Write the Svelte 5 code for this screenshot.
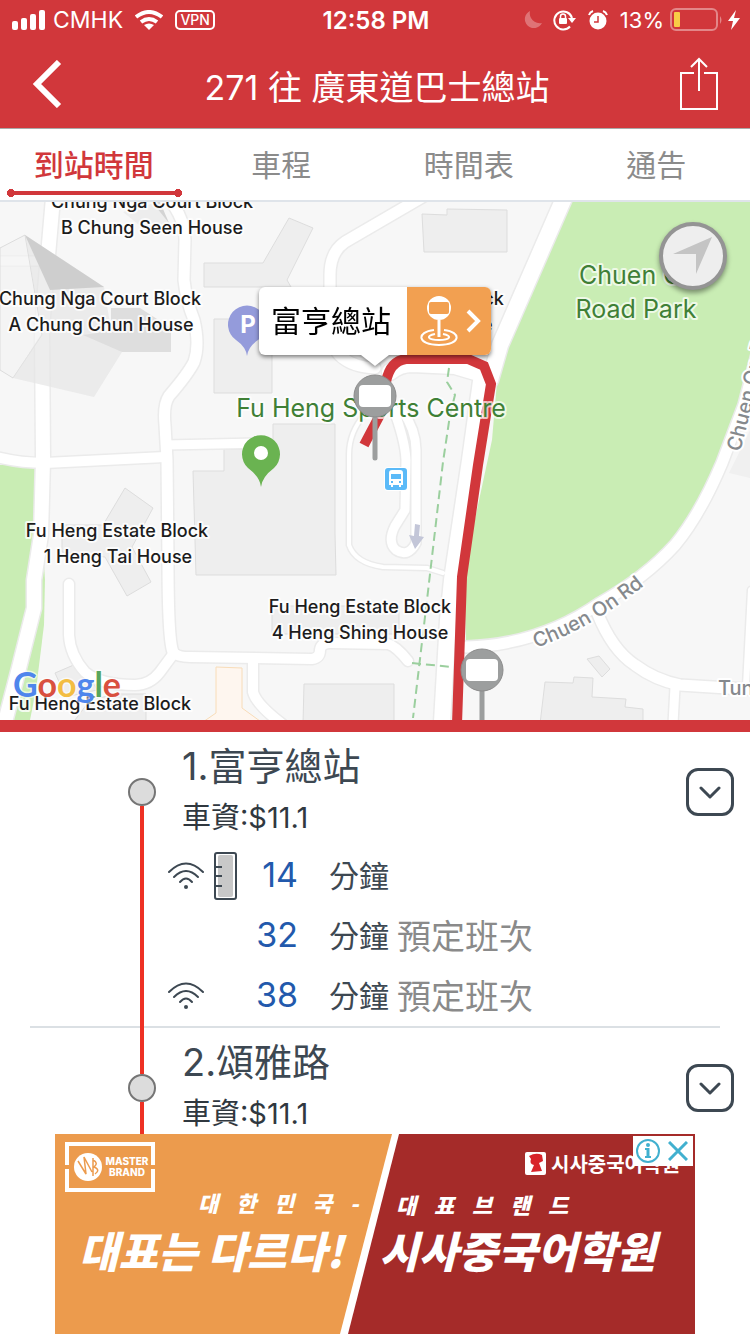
<script>
  const tabs = ['到站時間', '車程', '時間表', '通告'];
  let activeTab = $state(0);

  const stops = [
    {
      name: '1.富亨總站',
      fare: '車資:$11.1',
      arrivals: [
        { live: true, bus: true, minutes: 14, scheduled: false },
        { live: false, bus: false, minutes: 32, scheduled: true },
        { live: true, bus: false, minutes: 38, scheduled: true },
      ],
    },
    { name: '2.頌雅路', fare: '車資:$11.1', arrivals: [] },
  ];

  // white roads: path and width, each drawn over a wider grey casing
  const roads = [
    { d: 'M0 261 H40', w: 9 },
    { d: 'M53 198 L45 290 L42 330 L43 460 L41 535 L34 580 V608 L19 668 L5 722', w: 14 },
    { d: 'M-4 457 Q20 463 45 463 L165 457', w: 10 },
    { d: 'M168 198 Q185 218 185 240 L184 280 Q186 300 194 320 Q200 345 194 362 Q188 374 169 396 Q163 405 165 425 L167 460 L168 560 Q168 640 173 652', w: 11 },
    { d: 'M166 445 L262 443', w: 9 },
    { d: 'M69 584 V635 Q70 655 85 672 Q100 685 135 685 Q150 685 160 672 L174 653 Q178 657 190 657 L312 659 Q320 658 320 650 Q321 643 330 643 L388 644 Q396 646 408 661', w: 10 },
    { d: 'M253 660 V692 Q256 704 282 724', w: 10 },
    { d: 'M424 196 L345 242 Q330 252 330 275 V330 Q332 366 375 368', w: 11 },
    { d: 'M365 414 Q349 432 349 455 V545 Q355 563 383 567 L427 568 L443 573', w: 4 },
    { d: 'M393 408 Q405 440 406 460 L405 510 L395 526 Q387 542 396 550 Q408 558 416 543 V450 Q416 430 402 410', w: 9 },
    { d: 'M564 198 L500 345 L490 380', w: 16 },
    { d: 'M390 372 Q400 364 412 364 L455 366 L482 374 L470 460 L452 580 L448 620 L442 722', w: 16 },
    { d: 'M762 335 L744 405 L722 463 Q700 515 675 545 Q645 578 600 603 Q540 645 466 647', w: 11 },
    { d: 'M597 612 Q612 650 635 665 Q655 680 680 685 L760 690', w: 11 },
    { d: 'M675 687 L673 724', w: 9 },
    { d: 'M751 590 L746 686', w: 6 },
  ];

  const buildings = [
    '422,214 447,215 447,209 507,210 507,252 424,252',
    '289,218 313,228 287,280 291,287 204,287 204,263 263,263',
    '214,319 272,319 272,393 214,393',
    '193,471 224,471 224,449 273,449 273,424 335,424 335,534 336,575 196,575',
    '125,488 153,508 132,547 151,582 127,596 105,557 62,552 62,525 103,525',
    '272,606 399,606 399,634 272,634',
    '304,684 394,684 394,724 303,724',
    '55,673 83,661 97,690 66,697',
    '117,694 146,694 146,724 72,724 90,700',
    '545,682 573,683 574,677 593,678 592,697 626,699 625,707 643,709 643,724 540,724',
    '587,659 599,656 610,669 602,677',
  ];

  const labels = [
    { t: 'Chung Nga Court Block', x: 152, y: 208 },
    { t: 'B Chung Seen House', x: 152, y: 234 },
    { t: 'Chung Nga Court Block', x: 100, y: 305 },
    { t: 'A Chung Chun House', x: 101, y: 331 },
    { t: 'Block', x: 480, y: 305 },
    { t: 'House', x: 465, y: 331 },
    { t: 'Fu Heng Estate Block', x: 117, y: 537 },
    { t: '1 Heng Tai House', x: 118, y: 563 },
    { t: 'Fu Heng Estate Block', x: 360, y: 613 },
    { t: '4 Heng Shing House', x: 360, y: 639 },
    { t: 'Fu Heng Estate Block', x: 100, y: 710 },
  ];
</script>

{#snippet wifi()}
  <svg width="36" height="28" viewBox="0 0 36 28" fill="none" stroke="#3d4852" stroke-width="2" stroke-linecap="round">
    <path d="M1 10 Q18 -7 35 10"/>
    <path d="M6 15 Q18 3 30 15"/>
    <path d="M12 20 Q18 13 24 20"/>
    <circle cx="18" cy="25" r="2" fill="#3d4852" stroke="none"/>
  </svg>
{/snippet}

<div class="app">
  <div class="status">
    <div class="status-side">
      <svg width="33" height="20" viewBox="0 0 33 20" fill="#fff">
        <rect x="0" y="11" width="6" height="9" rx="2"/>
        <rect x="9" y="8" width="6" height="12" rx="2"/>
        <rect x="18" y="4" width="6" height="16" rx="2"/>
        <rect x="27" y="0" width="6" height="20" rx="2"/>
      </svg>
      <span class="carrier">CMHK</span>
      <svg class="status-wifi" width="28" height="20" viewBox="0 0 28 20" fill="none" stroke="#fff" stroke-width="4">
        <path d="M1 7 Q14 -3 27 7"/>
        <path d="M6 12 Q14 6 22 12"/>
        <path d="M14 20 L9 15 Q14 12 19 15 Z" fill="#fff" stroke="none"/>
      </svg>
      <span class="vpn">VPN</span>
    </div>
    <span class="clock">12:58 PM</span>
    <div class="status-side end">
      <svg width="20" height="20" viewBox="0 0 20 20" fill="#fff" opacity="0.3">
        <path d="M7 1 A9 9 0 1 0 19 13 A10 10 0 0 1 7 1 Z"/>
      </svg>
      <svg class="lock" width="23" height="22" viewBox="0 0 23 22" fill="none" stroke="#fff" stroke-width="2">
        <path d="M17 17.5 A9 9 0 1 1 19 9"/>
        <path d="M15 9 H23 L19 14 Z" fill="#fff" stroke="none"/>
        <rect x="6" y="9" width="8" height="6" rx="1" fill="#fff" stroke="none"/>
        <path d="M7.500 9 V7.500 a2.500 2.500 0 0 1 5 0 V9" stroke-width="1.500"/>
      </svg>
      <svg class="alarm" width="20" height="20" viewBox="0 0 20 20">
        <circle cx="10" cy="11" r="8.500" fill="#fff"/>
        <path d="M10 6 V12 H6" fill="none" stroke="#d1373b" stroke-width="1.500"/>
        <path d="M1 5 Q2 2 5 1 M19 5 Q18 2 15 1" fill="none" stroke="#fff" stroke-width="2"/>
      </svg>
      <span class="percent">13%</span>
      <svg width="53" height="24" viewBox="0 0 53 24">
        <rect x="1" y="1" width="46" height="21" rx="5" fill="none" stroke="#fff" stroke-opacity="0.4" stroke-width="2"/>
        <path d="M50 8 Q53 12 50 16 Z" fill="#fff" opacity="0.4"/>
        <rect x="4" y="4" width="6" height="15" rx="1" fill="#f8cd46"/>
      </svg>
      <svg class="bolt" width="12" height="20" viewBox="0 0 12 20" fill="#fff">
        <path d="M8 0 L0 11 H5 L3 20 L12 8 H6 Z"/>
      </svg>
    </div>
  </div>

  <header>
    <button aria-label="返回">
      <svg width="30" height="48" viewBox="0 0 30 48" fill="none" stroke="#fff" stroke-width="6">
        <path d="M27 2 L5 24 L27 46"/>
      </svg>
    </button>
    <h1>271 往 廣東道巴士總站</h1>
    <button class="right" aria-label="分享">
      <svg width="38" height="54" viewBox="0 0 38 54" fill="none" stroke="#fff" stroke-width="2">
        <path d="M14 16 H1 V52 H37 V16 H24"/>
        <path d="M19 34 V2 M11 10 L19 2 L27 10"/>
      </svg>
    </button>
  </header>

  <nav>
    {#each tabs as tab, i}
      <button class="tab" class:active={i === activeTab} onclick={() => (activeTab = i)}>{tab}</button>
    {/each}
  </nav>

  <section class="map">
    <svg class="map-art" viewBox="0 202 750 518">
      <rect x="0" y="202" width="750" height="518" fill="#f7f7f7"/>
      <path d="M573 198 H750 V370 L722 463 Q700 515 675 545 Q645 578 600 603 Q540 645 466 643 L464 570 L492 440 L498 370 Z" fill="#c9edb4"/>
      <path d="M0 465 H38 L45 580 L44 625 L36 690 L30 720 H0 Z" fill="#c9edb4"/>
      <path d="M738 455 L729 473 L750 478 V430 Z" fill="#f0f0f0"/>
      <path d="M216 667 L242 668 V708 L264 724 H200 L216 713 Z" fill="#fef6ef" stroke="#f8dcb8"/>

      {#each buildings as points}
        <polygon {points} fill="#eeeeee" stroke="#dddddd"/>
      {/each}

      <g fill="none" stroke-linecap="round" stroke-linejoin="round">
        {#each roads as road}
          <path d={road.d} stroke="#ebebeb" stroke-width={road.w + 3}/>
        {/each}
        {#each roads as road}
          <path d={road.d} stroke="#ffffff" stroke-width={road.w}/>
        {/each}
      </g>

      <!-- tilted tower blocks -->
      <path d="M0 248 L25 235 L42 335 L13 378 L0 370 Z" fill="#f2f2f2" fill-opacity="0.7" stroke="#dcdcdc"/>
      <path d="M25 235 L104 287 L111 330 L122 352 L94 397 L13 378 L42 333 Z" fill="#e6e6e6" fill-opacity="0.7"/>
      <path d="M25 235 L104 287 L50 290 Z" fill="#cecece"/>
      <path d="M111 308 H140 L171 328 V352 H122 L83 335 L111 331 Z" fill="#dedede"/>
      <path d="M123 212 L158 202 L169 223 L153 236 Z" fill="#ededed"/>
      <path d="M152 202 H160 L169 223 Z" fill="#d4d4d4"/>

      <path d="M449 368 L447 382 L455 395 L450 415 L443 462 L427 600 L413 718 M412 663 L452 667" fill="none" stroke="#9bcf9e" stroke-width="2" stroke-dasharray="9 5"/>
      <path d="M415 524 L420 525 L419 536 L424 537 L415 549 L409 535 L414 536 Z" fill="#c3c6d8"/>

      <path d="M364 445 L382 411 L386 382 Q390 361 406 359 L468 359 L484 366 L491 384 L478 465 L462 577 L457 724" fill="none" stroke="#d1373b" stroke-width="10"/>

      <g class="place">
        <text x="371" y="417" text-anchor="middle">Fu Heng Sports Centre</text>
        <text x="579" y="284">Chuen On</text>
        <text x="636" y="318" text-anchor="middle">Road Park</text>
      </g>

      <path id="road-lower" d="M536 648 Q600 625 660 572" fill="none"/>
      <path id="road-upper" d="M740 452 Q753 405 764 350 L790 250" fill="none"/>
      <g class="road-name">
        <text><textPath href="#road-lower">Chuen On Rd</textPath></text>
        <text><textPath href="#road-upper">Chuen On Rd</textPath></text>
        <text x="718" y="695">Tung</text>
      </g>

      <g class="block-name">
        {#each labels as label}
          <text x={label.x} y={label.y} text-anchor="middle">{label.t}</text>
        {/each}
      </g>

      <path d="M247 356 Q246 347 236 340 A19 19 0 1 1 258 340 Q248 347 247 356 Z" fill="#949bdb"/>
      <text class="parking" x="248" y="333" text-anchor="middle">P</text>
      <path d="M261 487 Q260 477 248 468 A19 19 0 1 1 274 468 Q262 477 261 487 Z" fill="#6ab351"/>
      <circle cx="261" cy="453" r="7" fill="#fff"/>

      <rect x="384" y="467" width="24" height="24" rx="4" fill="#fff"/>
      <rect x="385" y="468" width="22" height="22" rx="3" fill="#5bbaf8"/>
      <path d="M389 473 Q389 470 392 470 H400 Q403 470 403 473 V485 H401 V487 H399 V485 H393 V487 H391 V485 H389 Z" fill="#fff"/>
      <path d="M391 474 H401 V479 H391 Z M391 481 h2 v2 h-2 Z M399 481 h2 v2 h-2 Z" fill="#5bbaf8"/>

      {#each [{ x: 375, y: 396 }, { x: 482, y: 670 }] as flag}
        <g transform="translate({flag.x} {flag.y})">
          <path d="M0 20 V62" stroke="#9c9e9e" stroke-width="5" stroke-linecap="round"/>
          <circle r="21" fill="#9c9e9e" stroke="#8c8c8c"/>
          <rect x="-16" y="-11" width="32" height="22" rx="4" fill="#fff"/>
        </g>
      {/each}

      <text class="google" x="13" y="697"><tspan fill="#4f86ec">G</tspan><tspan fill="#d9503f">o</tspan><tspan fill="#f3bd42">o</tspan><tspan fill="#4f86ec">g</tspan><tspan fill="#58a55c">l</tspan><tspan fill="#d9503f">e</tspan></text>
    </svg>

    <button class="callout">
      <span class="callout-name">富亨總站</span>
      <span class="callout-go">
        <svg width="38" height="52" viewBox="0 0 38 52" fill="none" stroke="#fff" stroke-width="2">
          <circle cx="19" cy="13" r="12" fill="#fff" stroke="none"/>
          <rect x="9" y="7" width="20" height="12" rx="2" fill="#f2a051" stroke="none"/>
          <path d="M19 25 V42" stroke-width="3"/>
          <path d="M14 35 C-4 37 -3 50 19 50 C41 50 42 37 24 35"/>
          <path d="M15 39 C5 41 8 45 19 45 C30 45 33 41 23 39"/>
        </svg>
        <svg width="16" height="24" viewBox="0 0 16 24" fill="none" stroke="#fff" stroke-width="4">
          <path d="M2 2 L12 12 L2 22"/>
        </svg>
      </span>
    </button>

    <button class="locate" aria-label="我的位置">
      <svg width="40" height="40" viewBox="0 0 40 40" fill="#c4c4c4">
        <path d="M39 1 L23 38 V18 H0 Z"/>
      </svg>
    </button>
  </section>

  <ul class="stops">
    {#each stops as stop, i}
      <li>
        <div class="rail">
          <span class="rail-top" class:hidden={i === 0}></span>
          <span class="dot"></span>
          <span class="rail-rest"></span>
        </div>
        <div class="info">
          <h2>{stop.name}</h2>
          <p class="fare">{stop.fare}</p>
          <div class="arrivals">
            {#each stop.arrivals as arrival}
              <div class="arrival">
                <span class="icon">{#if arrival.live}{@render wifi()}{/if}</span>
                <span class="icon">
                  {#if arrival.bus}
                    <svg width="23" height="48" viewBox="0 0 23 48" fill="none" stroke="#3d4852">
                      <rect x="1" y="1" width="21" height="46" rx="2" stroke-width="2"/>
                      <rect x="4" y="3" width="15" height="42" rx="2" fill="#c8c8c8" stroke="none"/>
                      <path d="M1 15 H8 M1 24 H8 M1 34 H8" stroke-width="2"/>
                    </svg>
                  {/if}
                </span>
                <span class="minutes">{arrival.minutes}</span>
                <span class="unit">分鐘</span>
                {#if arrival.scheduled}<span class="scheduled">預定班次</span>{/if}
              </div>
            {/each}
          </div>
        </div>
        <button class="toggle" aria-label="展開">
          <svg width="22" height="14" viewBox="0 0 22 14" fill="none" stroke="#3d4852" stroke-width="3" stroke-linecap="round" stroke-linejoin="round">
            <path d="M2 3 L11 12 L20 3"/>
          </svg>
        </button>
      </li>
    {/each}
  </ul>

  <aside class="ad">
    <a href="#ad">
      <svg viewBox="0 0 640 200">
        <rect width="640" height="200" fill="#ec9b4d"/>
        <path d="M340 0 H640 V200 H290 Z" fill="#a52b29"/>
        <path d="M337 0 H344 L293 200 H285 Z" fill="#fff"/>

        <path d="M12 31 V10 H98 V31 M12 35 V56 H98 V35" fill="none" stroke="#fff" stroke-width="4"/>
        <circle cx="33" cy="33" r="14" fill="#fff"/>
        <path d="M23 27 L31 40 L29 23 L37 38 M38 24 V42 M38 26 Q44 29 39 33 Q46 36 40 40" fill="none" stroke="#ec9b4d" stroke-width="1.500"/>
        <g class="ad-logo">
          <text x="72" y="31" text-anchor="middle">MASTER</text>
          <text x="72" y="42" text-anchor="middle">BRAND</text>
        </g>

        <rect x="470" y="18" width="21" height="23" rx="2" fill="#fff"/>
        <path d="M474 22 Q481 18 487 21 L488 27 L484 29 L487 37 L476 38 L479 31 Q474 30 476 25 Z" fill="#d8232a"/>
        <text class="ad-name" x="496" y="38">시사중국어학원</text>

        <g class="ad-sub">
          <text x="143 181 219 257 295" y="78">대한민국-</text>
          <text x="341 379 417 455 493" y="80">대표브랜드</text>
        </g>
        <g class="ad-main">
          <text x="24" y="134">대표는 다르다!</text>
          <text x="324" y="134">시사중국어학원</text>
        </g>
      </svg>
    </a>
    <div class="ad-choices">
      <button aria-label="廣告資訊">
        <svg width="24" height="24" viewBox="0 0 24 24" fill="none" stroke="#41b0cf" stroke-width="2">
          <circle cx="12" cy="12" r="11"/>
          <path d="M9 10 H12 M9 18 H15"/>
          <path d="M12 9 V19" stroke-width="3"/>
          <circle cx="12" cy="6" r="2" fill="#41b0cf" stroke="none"/>
        </svg>
      </button>
      <button aria-label="關閉廣告">
        <svg width="20" height="20" viewBox="0 0 20 20" fill="none" stroke="#41b0cf" stroke-width="3">
          <path d="M1 1 L19 19 M19 1 L1 19"/>
        </svg>
      </button>
    </div>
  </aside>
</div>

<style>
  :global(body) {
    margin: 0;
    background: #fff;
  }

  .app {
    display: flex;
    flex-direction: column;
    height: 100vh;
    overflow: hidden;
    font-family: Inter, 'Noto Sans CJK TC', sans-serif;
    color: #3d4852;
  }

  button {
    padding: 0;
    border: none;
    background: none;
    font-family: inherit;
    cursor: pointer;
  }

  svg {
    display: block;
    flex: none;
  }

  .status {
    display: grid;
    grid-template-columns: 1fr auto 1fr;
    align-items: center;
    height: 40px;
    padding: 0 10px 0 12px;
    background: #d1373b;
    color: #fff;
    font-size: 23px;
  }

  .status-side {
    display: flex;
    align-items: center;
  }

  .end {
    justify-content: flex-end;
  }

  .carrier {
    margin-left: 8px;
  }

  .status-wifi {
    margin: 0 12px;
  }

  .vpn {
    box-sizing: border-box;
    width: 40px;
    height: 20px;
    border: 2px solid #fff;
    border-radius: 5px;
    font-size: 14px;
    font-weight: 500;
    line-height: 16px;
    text-align: center;
  }

  .clock {
    font-size: 24px;
    font-weight: 600;
  }

  .lock {
    margin-left: 10px;
  }

  .alarm {
    margin: 0 12px;
  }

  .percent {
    margin-right: 6px;
    font-size: 22px;
  }

  .bolt {
    margin-left: 5px;
  }

  header {
    display: grid;
    grid-template-columns: 1fr auto 1fr;
    align-items: center;
    height: 88px;
    padding: 0 32px;
    background: #d1373b;
    border-bottom: 1px solid #a9a9a9;
  }

  h1 {
    margin: 0;
    padding: 8px 0 0 4px;
    color: #fff;
    font-size: 34px;
    font-weight: 400;
    line-height: 40px;
  }

  .right {
    justify-self: end;
  }

  nav {
    display: flex;
    height: 71px;
    border-bottom: 2px solid #dfe4ea;
  }

  .tab {
    position: relative;
    flex: 1;
    padding-bottom: 4px;
    color: #8b8b8b;
    font-size: 30px;
    font-weight: 400;
  }

  .active {
    color: #d1373b;
    font-weight: 500;
  }

  .active::before {
    content: '';
    position: absolute;
    right: 8px;
    bottom: 5px;
    left: 8px;
    height: 4px;
    background: #d1373b;
  }

  .active::after {
    content: '';
    position: absolute;
    right: 6px;
    bottom: 3px;
    left: 7px;
    height: 8px;
    background:
      radial-gradient(circle at 4px 4px, #d1373b 4px, transparent 4px),
      radial-gradient(circle at calc(100% - 4px) 4px, #d1373b 4px, transparent 4px);
  }

  .map {
    position: relative;
    border-bottom: 12px solid #d1373b;
  }

  .map-art {
    width: 100%;
  }

  .map-art text {
    paint-order: stroke;
    stroke-linejoin: round;
  }

  .block-name {
    fill: #1c1c1c;
    stroke: #fff;
    stroke-opacity: 0.8;
    stroke-width: 4px;
    font-size: 18px;
    font-weight: 500;
  }

  .place {
    fill: #3f8036;
    stroke: #fff;
    stroke-opacity: 0.7;
    stroke-width: 4px;
    font-size: 25px;
  }

  .road-name {
    fill: #85898d;
    stroke: #fff;
    stroke-width: 4px;
    font-size: 20px;
    font-weight: 500;
  }

  .parking {
    fill: #fff;
    font-size: 24px;
    font-weight: 700;
  }

  .google {
    font-family: Lato, sans-serif;
    font-size: 34px;
    font-weight: 700;
    stroke: #fff;
    stroke-opacity: 0.6;
    stroke-width: 3px;
  }

  .callout {
    position: absolute;
    top: 85px;
    left: 50%;
    display: flex;
    height: 68px;
    transform: translateX(-50%);
    border-radius: 6px;
    background: #fff;
    filter: drop-shadow(0 2px 2px rgba(0, 0, 0, 0.5));
  }

  .callout::after {
    content: '';
    position: absolute;
    top: 100%;
    left: 50%;
    margin-left: -14px;
    border: 14px solid transparent;
    border-top: 11px solid #fff;
    border-bottom: 0;
  }

  .callout-name {
    padding: 0 16px 0 12px;
    color: #000;
    font-size: 30px;
    line-height: 68px;
  }

  .callout-go {
    display: flex;
    align-items: center;
    justify-content: center;
    gap: 8px;
    box-sizing: border-box;
    width: 84px;
    padding-left: 4px;
    border-radius: 0 6px 6px 0;
    background: #f2a051;
  }

  .locate {
    position: absolute;
    top: 20px;
    right: 23px;
    display: flex;
    align-items: center;
    justify-content: center;
    box-sizing: border-box;
    width: 68px;
    height: 68px;
    border: 4px solid #949494;
    border-radius: 50%;
    background: #eeeeee;
    box-shadow: 0 3px 5px rgba(0, 0, 0, 0.4);
  }

  .stops {
    flex: 1;
    min-height: 0;
    margin: 0;
    padding: 0;
    overflow: hidden;
    list-style: none;
  }

  li {
    position: relative;
    display: flex;
    gap: 12px;
    padding: 0 16px 0 128px;
  }

  li::after {
    content: '';
    position: absolute;
    right: 30px;
    bottom: 0;
    left: 30px;
    height: 2px;
    background: #dbe0e4;
  }

  .rail {
    z-index: 1;
    display: flex;
    flex-direction: column;
    align-items: center;
  }

  .rail-top,
  .rail-rest {
    width: 4px;
    background: #ee3124;
  }

  .rail-top {
    height: 46px;
  }

  .rail-rest {
    flex: 1;
  }

  .hidden {
    visibility: hidden;
  }

  .dot {
    box-sizing: border-box;
    width: 28px;
    height: 28px;
    border: 2px solid #757575;
    border-radius: 50%;
    background: #dcdcdc;
  }

  .info {
    flex: 1;
    padding: 6px 0 2px;
  }

  h2 {
    margin: 0;
    padding-left: 14px;
    font-size: 38px;
    font-weight: 400;
    line-height: 56px;
  }

  .fare {
    margin: 0;
    padding-left: 14px;
    color: #30383f;
    font-size: 29px;
    line-height: 48px;
  }

  .arrivals {
    padding: 2px 0;
  }

  .arrival {
    display: grid;
    grid-template-columns: 46px 24px 60px auto 1fr;
    align-items: center;
    height: 60px;
  }

  .icon {
    padding-top: 4px;
  }

  .minutes {
    color: #2259ac;
    font-size: 34px;
    text-align: right;
  }

  .unit {
    margin: 0 8px 0 31px;
    font-size: 30px;
  }

  .scheduled {
    color: #8a8a8a;
    font-size: 34px;
  }

  .toggle {
    display: flex;
    align-items: center;
    justify-content: center;
    box-sizing: border-box;
    width: 48px;
    height: 48px;
    margin-top: 36px;
    border: 3px solid #3d4852;
    border-radius: 12px;
  }

  .ad {
    position: relative;
    align-self: center;
    width: 640px;
    max-width: 100%;
  }

  .ad svg text {
    fill: #fff;
    font-family: 'Noto Sans CJK KR', sans-serif;
  }

  .ad .ad-logo text {
    font-family: Inter, sans-serif;
    font-size: 10px;
    font-weight: 800;
  }

  .ad-name {
    font-size: 20px;
    font-weight: 700;
  }

  .ad-sub {
    font-size: 22px;
    font-style: italic;
    font-weight: 900;
  }

  .ad-main {
    font-size: 43px;
    font-style: italic;
    font-weight: 900;
  }

  .ad-choices {
    position: absolute;
    top: 2px;
    right: 2px;
    display: flex;
    align-items: center;
    gap: 8px;
    height: 30px;
    padding: 0 5px 0 3px;
    background: #fff;
  }
</style>
